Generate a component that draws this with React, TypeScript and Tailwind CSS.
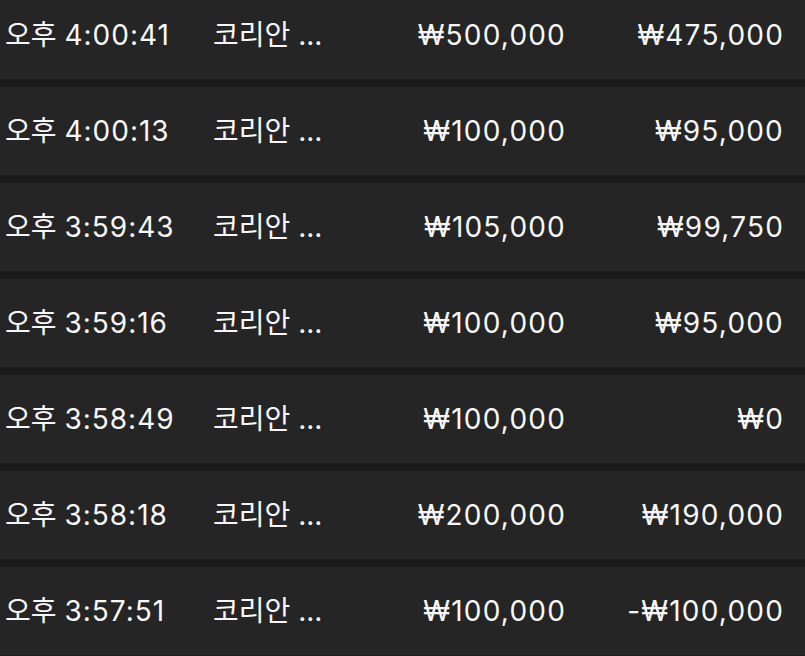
import React from "react";

const rows = [
  { t: "4:00:41", a: "₩500,000", b: "₩475,000" },
  { t: "4:00:13", a: "₩100,000", b: "₩95,000" },
  { t: "3:59:43", a: "₩105,000", b: "₩99,750" },
  { t: "3:59:16", a: "₩100,000", b: "₩95,000" },
  { t: "3:58:49", a: "₩100,000", b: "₩0" },
  { t: "3:58:18", a: "₩200,000", b: "₩190,000" },
  { t: "3:57:51", a: "₩100,000", b: "-₩100,000" },
];

export default function App() {
  return (
    <div
      className="w-[805px] h-[656px] overflow-hidden bg-[#1a1a1a] text-[#f7f7f7]"
      style={{ fontFamily: '"Inter", "Noto Sans CJK KR", sans-serif' }}
    >
      <div className="-mt-[9px] flex flex-col gap-[8px]">
        {rows.map((r, i) => (
          <div
            key={i}
            className="h-[88px] shrink-0 bg-[#252525] flex items-center pl-[5px] pr-[21px] text-[28px] leading-none"
          >
            <div className="w-[208px] whitespace-nowrap">
              오후 <span className="tracking-[1px]">{r.t}</span>
            </div>
            <div className="flex-1 whitespace-nowrap">코리안 ...</div>
            <div className="w-[200px] text-right whitespace-nowrap tracking-[1.2px]">{r.a}</div>
            <div className="w-[218px] text-right whitespace-nowrap tracking-[1.2px]">{r.b}</div>
          </div>
        ))}
      </div>
    </div>
  );
}
